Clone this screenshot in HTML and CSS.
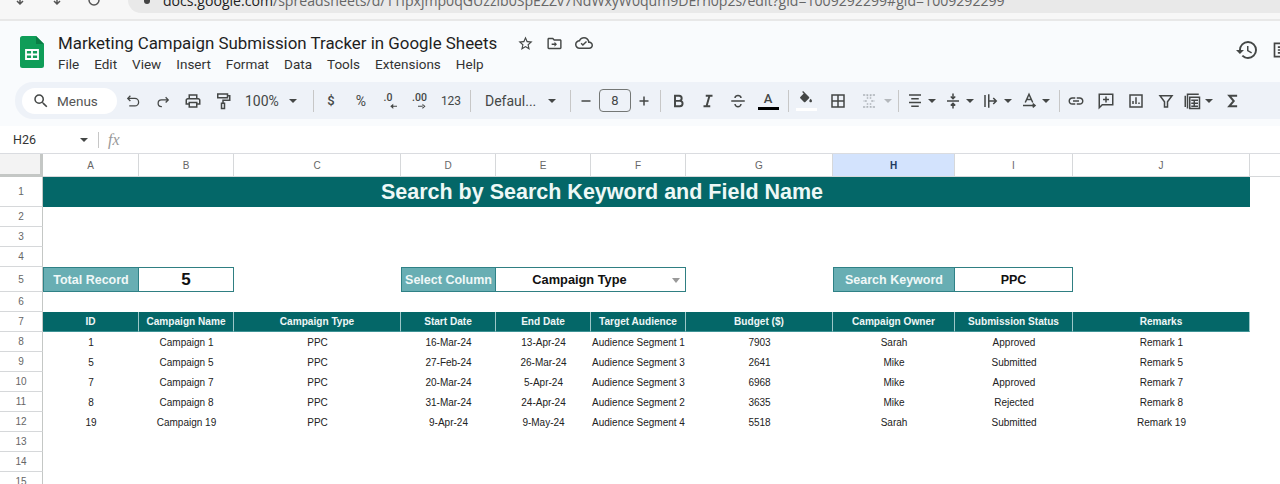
FILE: index.html
```html
<!DOCTYPE html>
<html lang="en">
<head>
<meta charset="utf-8">
<title>Marketing Campaign Submission Tracker in Google Sheets</title>
<link rel="stylesheet" href="styles.css">
</head>
<body>
<div class="chrome">
  <div class="nav">
    <svg class="nav-ic" viewBox="0 0 20 6"><path d="M10 0v4M7 1l3 3 3-3"/></svg>
    <svg class="nav-ic" viewBox="0 0 20 6"><path d="M10 0v4M7 1l3 3 3-3"/></svg>
    <svg class="nav-ic" viewBox="0 0 20 6"><path d="M5 0a5 5 0 0 0 10 0"/></svg>
  </div>
  <div class="addr"><span class="lock"></span><span class="url"><b>docs.google.com</b>/spreadsheets/d/1Tipxjmp0qGUzzib0SpEZZv7NdWxyW0qum9DErn0p2s/edit?gid=1009292299#gid=1009292299</span></div>
</div>
<div class="rule"></div>
<header class="app">
  <svg class="logo" viewBox="0 0 24 32"><path fill="#0f9d58" d="M2.5 0H16l8 8v21.500a2.500 2.500 0 0 1-2.500 2.500h-19A2.500 2.500 0 0 1 0 29.500v-27A2.500 2.500 0 0 1 2.500 0z"/><path fill="#0a7d45" d="M16 0l8 8h-8z"/><path fill="none" stroke="#fff" stroke-width="1.800" d="M6 14h12v9H6zM6 18.500h12M12 14v9"/></svg>
  <div class="doc">
    <div class="doc-title">
      <span class="name">Marketing Campaign Submission Tracker in Google Sheets</span>
      <svg class="ic ic-star" viewBox="0 0 24 24"><path d="M22 9.240l-7.190-.620L12 2 9.190 8.630 2 9.240l5.460 4.730L5.820 21 12 17.270 18.180 21l-1.630-7.030L22 9.240zM12 15.400l-3.760 2.270 1-4.280-3.320-2.880 4.380-.380L12 6.100l1.710 4.040 4.380.380-3.320 2.880 1 4.280L12 15.400z"/></svg>
      <svg class="ic ic-folder" viewBox="0 0 24 24"><path d="M20 6h-8l-2-2H4c-1.100 0-2 .900-2 2v12c0 1.100.900 2 2 2h16c1.100 0 2-.900 2-2V8c0-1.100-.900-2-2-2zm0 12H4V6h5.170l2 2H20v10z"/><path d="M12 9.500l3.500 3.500-3.500 3.500v-2.500H8v-2h4z"/></svg>
      <svg class="ic ic-cloud" viewBox="0 0 24 24"><path d="M19.350 10.040C18.670 6.590 15.640 4 12 4 9.110 4 6.600 5.640 5.350 8.040 2.340 8.360 0 10.910 0 14c0 3.310 2.690 6 6 6h13c2.760 0 5-2.240 5-5 0-2.640-2.050-4.780-4.650-4.960zM19 18H6c-2.210 0-4-1.790-4-4s1.790-4 4-4h.710C7.370 7.690 9.480 6 12 6c3.040 0 5.500 2.460 5.500 5.500v.5H19c1.660 0 3 1.340 3 3s-1.340 3-3 3z"/><path d="M10.500 16l-3-3 1.300-1.300 1.700 1.700 4.200-4.200 1.300 1.300z"/></svg>
    </div>
    <nav class="menu"><span>File</span><span>Edit</span><span>View</span><span>Insert</span><span>Format</span><span>Data</span><span>Tools</span><span>Extensions</span><span>Help</span></nav>
  </div>
  <div class="app-right">
    <svg class="ic ic-hist" viewBox="0 0 24 24"><path d="M13 3a9 9 0 0 0-9 9H1l3.890 3.890.070.140L9 12H6c0-3.870 3.130-7 7-7s7 3.130 7 7-3.130 7-7 7c-1.930 0-3.680-.790-4.940-2.060l-1.420 1.420A8.954 8.954 0 0 0 13 21a9 9 0 0 0 0-18zm-1 5v5l4.280 2.540.720-1.210-3.500-2.080V8H12z"/></svg>
    <svg class="ic ic-notes" viewBox="0 0 24 24"><path fill="none" stroke="#444" stroke-width="2" d="M3 4h18v16H3zM7 8.500h10M7 12h10M7 15.500h10"/></svg>
  </div>
</header>
<div class="toolbar-wrap">
  <div class="toolbar">
    <div class="pill"><svg class="ic ic-s" viewBox="0 0 24 24"><path d="M15.500 14h-.790l-.280-.270A6.470 6.470 0 0 0 16 9.500 6.500 6.500 0 1 0 9.500 16c1.610 0 3.090-.590 4.230-1.570l.270.280v.790l5 4.990L20.490 19l-4.990-5zm-6 0C7.010 14 5 11.990 5 9.500S7.010 5 9.500 5 14 7.010 14 9.500 11.990 14 9.500 14z"/></svg><span>Menus</span></div>
    <div class="btn"><svg class="st thin" viewBox="0 0 24 24"><path d="M8.500 5L5 8.500 8.500 12M5 8.500h9.500a5 5 0 0 1 0 10H7"/></svg></div>
    <div class="btn"><svg class="st thin" viewBox="0 0 24 24"><path d="M15.500 7L19 10.500 15.500 14M19 10.500H10a4.500 4.500 0 0 0 0 9h.5"/></svg></div>
    <div class="btn"><svg class="ic" viewBox="0 0 24 24"><path d="M19 8h-1V3H6v5H5c-1.660 0-3 1.340-3 3v6h4v4h12v-4h4v-6c0-1.660-1.340-3-3-3zM8 5h8v3H8V5zm8 12v2H8v-4h8v2zm2-2v-2H6v2H4v-4c0-.550.450-1 1-1h14c.550 0 1 .450 1 1v4h-2z"/></svg></div>
    <div class="btn"><svg class="st" viewBox="0 0 24 24"><path d="M5 2.500h13v5H5zM18 5h3v6h-9v4M10 15h4v7h-4z"/></svg></div>
    <div class="zoomsel"><span>100%</span><i class="caret"></i></div>
    <div class="sep s-a"></div>
    <div class="btn txt bold-s">$</div>
    <div class="btn txt pct">%</div>
    <div class="btn"><svg class="ic" viewBox="0 0 24 24"><text x="2" y="12" class="dec">.0</text><path d="M12 18.200h8v1.600h-8zM15 15.500v7L11 19z"/></svg></div>
    <div class="btn"><svg class="ic" viewBox="0 0 24 24"><text x="0" y="12" class="dec">.00</text><path d="M8 18.200h8v1.600H8zM14 15.500v7l4-3.500z"/></svg></div>
    <div class="btn txt t123">123</div>
    <div class="sep s-b"></div>
    <div class="fontsel"><span>Defaul...</span><i class="caret"></i></div>
    <div class="sep s-c"></div>
    <div class="btn nar"><svg class="st" viewBox="0 0 24 24"><path d="M6 12h12"/></svg></div>
    <div class="size">8</div>
    <div class="btn nar"><svg class="st" viewBox="0 0 24 24"><path d="M6 12h12M12 6v12"/></svg></div>
    <div class="sep s-d"></div>
    <div class="btn"><svg class="st thick" viewBox="0 0 24 24"><path d="M8 5h5.500a3.300 3.300 0 0 1 0 6.800H8zM8 11.800h6.500a3.600 3.600 0 0 1 0 7.200H8z"/></svg></div>
    <div class="btn"><svg class="st thick" viewBox="0 0 24 24"><path d="M9 5h9M6 19h9M14 5l-4 14"/></svg></div>
    <div class="btn"><svg class="st" viewBox="0 0 24 24"><path d="M3 12h18M16 8c0-2-2-3.500-4-3.500S8 6 8 8M8 16c0 2 2 3.500 4 3.500s4-1.500 4-3.500"/></svg></div>
    <div class="btn col"><span class="a-glyph">A</span><i class="bar black"></i></div>
    <div class="sep s-e"></div>
    <div class="btn col"><svg class="ic ic-fill" viewBox="0 0 24 24"><path d="M16.560 8.940 7.620 0 6.210 1.410l2.380 2.380-5.150 5.150c-.590.590-.590 1.540 0 2.120l5.500 5.500c.290.290.680.440 1.060.440s.770-.150 1.060-.440l5.500-5.500c.590-.580.590-1.530 0-2.120zM19 11.500s-2 2.170-2 3.500c0 1.100.900 2 2 2s2-.900 2-2c0-1.330-2-3.500-2-3.500z"/></svg><i class="bar white"></i></div>
    <div class="btn b-border"><svg class="st" viewBox="0 0 24 24"><path d="M4 4h16v16H4zM12 4v16M4 12h16"/></svg></div>
    <div class="btn"><svg class="st dim dash" viewBox="0 0 24 24"><path d="M4 4h6v5M20 4h-6v5M4 20h6v-5M20 20h-6v-5M9 12H4M15 12h5"/></svg></div>
    <i class="caret dimc c-merge"></i>
    <div class="sep s-f"></div>
    <div class="split"><svg class="st" viewBox="0 0 24 24"><path d="M4 4h16M7 9h10M4 14h16M7 19h10"/></svg><i class="caret"></i></div>
    <div class="split"><svg class="st" viewBox="0 0 24 24"><path d="M4 12h16M12 2v7M12 22v-7M9 6l3 3 3-3M9 18l3-3 3 3"/></svg><i class="caret"></i></div>
    <div class="split"><svg class="st" viewBox="0 0 24 24"><path d="M4 4v16M9 3v18M9 12h10M15 8l4 4-4 4"/></svg><i class="caret"></i></div>
    <div class="split"><svg class="st" viewBox="0 0 24 24"><path d="M7 14l5-11 5 11M9 10h6M4 18h15M17 15.500l3 2.500-3 2.500"/></svg><i class="caret"></i></div>
    <div class="sep s-g"></div>
    <div class="btn"><svg class="ic" viewBox="0 0 24 24"><path d="M3.900 12c0-1.710 1.390-3.100 3.100-3.100h4V7H7c-2.760 0-5 2.240-5 5s2.240 5 5 5h4v-1.900H7c-1.710 0-3.100-1.390-3.100-3.100zM8 13h8v-2H8v2zm9-6h-4v1.900h4c1.710 0 3.100 1.390 3.100 3.100s-1.390 3.100-3.100 3.100h-4V17h4c2.760 0 5-2.240 5-5s-2.240-5-5-5z"/></svg></div>
    <div class="btn"><svg class="st" viewBox="0 0 24 24"><path d="M3 3h18v14H7l-4 4zM12 6v8M8 10h8"/></svg></div>
    <div class="btn"><svg class="st" viewBox="0 0 24 24"><path d="M4 4h16v16H4zM8 16v-4M12 16V7M16 16v-2"/></svg></div>
    <div class="btn"><svg class="st" viewBox="0 0 24 24"><path d="M4 5h16l-6 8v7h-4v-7z"/></svg></div>
    <div class="split func"><svg class="st" viewBox="0 0 24 24"><path d="M3 20V5M6 22V3h15M9 7h13v15H9zM11 11h9M11 15h9M11 19h9M15 11v9"/></svg><i class="caret"></i></div>
    <div class="btn"><svg class="st thick" viewBox="0 0 24 24"><path d="M17.500 5H7l6 7-6 7h10.500"/></svg></div>
  </div>
</div>
<div class="fbar"><span class="ref">H26</span><i class="caret"></i><div class="sep fsep"></div><span class="fx">fx</span></div>
<main class="sheet">
  <div class="row r-head">
    <div class="corner"></div><div class="ch">A</div><div class="ch">B</div><div class="ch">C</div><div class="ch">D</div><div class="ch">E</div><div class="ch">F</div><div class="ch">G</div><div class="ch sel">H</div><div class="ch">I</div><div class="ch">J</div><div class="ch end"></div>
  </div>
  <div class="row r1"><div class="rh">1</div><div class="title">Search by Search Keyword and Field Name</div></div>
  <div class="row r20"><div class="rh">2</div></div>
  <div class="row r20"><div class="rh">3</div></div>
  <div class="row r20"><div class="rh">4</div></div>
  <div class="row r5">
    <div class="rh">5</div>
    <div class="lab">Total Record</div><div class="val big">5</div><div></div>
    <div class="lab">Select Column</div><div class="val span2">Campaign Type<i class="dd"></i></div><div></div>
    <div class="lab">Search Keyword</div><div class="val">PPC</div>
  </div>
  <div class="row r20"><div class="rh">6</div></div>
  <div class="row r20 r-th">
    <div class="rh">7</div><div class="th">ID</div><div class="th">Campaign Name</div><div class="th">Campaign Type</div><div class="th">Start Date</div><div class="th">End Date</div><div class="th">Target Audience</div><div class="th">Budget ($)</div><div class="th">Campaign Owner</div><div class="th">Submission Status</div><div class="th">Remarks</div>
  </div>
  <div class="row r20"><div class="rh">8</div><div class="td">1</div><div class="td">Campaign 1</div><div class="td">PPC</div><div class="td">16-Mar-24</div><div class="td">13-Apr-24</div><div class="td">Audience Segment 1</div><div class="td">7903</div><div class="td">Sarah</div><div class="td">Approved</div><div class="td">Remark 1</div></div>
  <div class="row r20"><div class="rh">9</div><div class="td">5</div><div class="td">Campaign 5</div><div class="td">PPC</div><div class="td">27-Feb-24</div><div class="td">26-Mar-24</div><div class="td">Audience Segment 3</div><div class="td">2641</div><div class="td">Mike</div><div class="td">Submitted</div><div class="td">Remark 5</div></div>
  <div class="row r20"><div class="rh">10</div><div class="td">7</div><div class="td">Campaign 7</div><div class="td">PPC</div><div class="td">20-Mar-24</div><div class="td">5-Apr-24</div><div class="td">Audience Segment 3</div><div class="td">6968</div><div class="td">Mike</div><div class="td">Approved</div><div class="td">Remark 7</div></div>
  <div class="row r20"><div class="rh">11</div><div class="td">8</div><div class="td">Campaign 8</div><div class="td">PPC</div><div class="td">31-Mar-24</div><div class="td">24-Apr-24</div><div class="td">Audience Segment 2</div><div class="td">3635</div><div class="td">Mike</div><div class="td">Rejected</div><div class="td">Remark 8</div></div>
  <div class="row r20"><div class="rh">12</div><div class="td">19</div><div class="td">Campaign 19</div><div class="td">PPC</div><div class="td">9-Apr-24</div><div class="td">9-May-24</div><div class="td">Audience Segment 4</div><div class="td">5518</div><div class="td">Sarah</div><div class="td">Submitted</div><div class="td">Remark 19</div></div>
  <div class="row r20"><div class="rh">13</div></div>
  <div class="row r20"><div class="rh">14</div></div>
  <div class="row r20"><div class="rh">15</div></div>
</main>
</body>
</html>
```

FILE: styles.css
```css
* { box-sizing: border-box; }
html, body { margin: 0; height: 484px; overflow: hidden; background: #fff; }
body { font-family: "Roboto", "Liberation Sans", sans-serif; color: #444746; }
i { display: block; font-style: normal; }

.chrome { height: 19px; background: #f7f7f7; display: flex; align-items: flex-start; overflow: hidden; }
.nav { width: 128px; display: flex; gap: 17px; padding-left: 10px; }
.nav-ic { width: 20px; height: 6px; fill: none; stroke: #555; stroke-width: 1.500; }
.addr { flex: 1; height: 13px; background: #e9e9e9; border-bottom-left-radius: 13px; overflow: hidden; display: flex; padding-left: 16px; }
.lock { width: 6px; height: 4px; background: #444; border-radius: 0 0 3px 3px; margin-right: 13px; }
.url { font-family: "Open Sans", "Liberation Sans", sans-serif; font-size: 14.100px; line-height: 0; padding-top: 1px; color: #666; white-space: nowrap; }
.url b { font-weight: 400; color: #222; }
.rule { height: 2px; background: #e8e8e8; }

.app { height: 61px; background: #f9fbfd; display: flex; align-items: flex-start; padding: 15px 0 0 20px; }
.logo { width: 24px; height: 32px; flex: none; }
.doc { margin-left: 14px; margin-top: -6px; }
.doc-title { display: flex; align-items: center; height: 26px; }
.name { font-size: 16.900px; color: #1f1f1f; white-space: nowrap; width: 459px; }
.ic { width: 18px; height: 18px; fill: #444746; flex: none; }
.ic-folder { margin-left: 12px; width: 17px; height: 17px; }
.ic-cloud { margin-left: 12px; }
.ic-star { width: 17px; height: 17px; }
.menu { display: flex; gap: 15px; font-size: 13.500px; color: #333; margin-top: -1px; line-height: 18px; }
.app-right { margin-left: auto; display: flex; align-items: center; gap: 13px; margin-right: -12px; margin-top: 2px; }
.ic-hist { width: 24px; height: 24px; }
.ic-notes { width: 20px; height: 20px; }

.toolbar-wrap { height: 44px; background: #f9fbfd; padding: 0 0 7px 15px; }
.toolbar { height: 37px; background: #eef2f8; border-radius: 18px 0 0 18px; display: flex; align-items: center; padding-left: 7px; white-space: nowrap; }
.pill { width: 95px; height: 26px; background: #fff; border-radius: 13px; display: flex; align-items: center; padding-left: 10px; gap: 7px; font-size: 13.500px; color: #555; flex: none; }
.btn { width: 30px; height: 30px; display: flex; align-items: center; justify-content: center; flex: none; font-size: 13px; }
.btn.nar { width: 26px; }
.st { width: 18px; height: 18px; fill: none; stroke: #444746; stroke-width: 2; flex: none; }
.st.thin { stroke-width: 1.700; }
.st.thick { stroke-width: 2.600; }
.st.dim { stroke: #aeb4b9; }
.st.dash { stroke-dasharray: 3 1.500; }
.pill + .btn { margin-left: 1px; }
.txt { color: #444746; }
.bold-s { font-weight: 500; }
.pct { font-size: 14px; }
.t123 { font-size: 12px; }
.dec { font: 500 14px "Roboto", sans-serif; }
.zoomsel { width: 70px; padding-left: 7px; display: flex; align-items: center; gap: 10px; font-size: 14px; flex: none; }
.caret { width: 0; height: 0; border: 4px solid transparent; border-top: 4px solid #444746; border-bottom: 0; flex: none; }
.sep { width: 1px; height: 22px; background: #c7c7c7; flex: none; }
.s-a { margin: 0 2px 0 5px; }
.s-b { margin: 0 2px 0 4px; }
.s-c { margin: 0 2px 0 5px; }
.s-d { margin: 0 2px 0 3px; }
.s-e { margin: 0 2px 0 5px; }
.s-f { margin: 0 5px 0 6px; }
.s-g { margin: 0 1px 0 3px; }
.fontsel { width: 92px; padding-left: 12px; display: flex; align-items: center; gap: 12px; font-size: 14px; flex: none; }
.size { width: 32px; height: 23px; border: 1px solid #747775; border-radius: 4px; display: flex; align-items: center; justify-content: center; font-size: 13px; flex: none; }
.col { flex-direction: column; justify-content: center; gap: 1px; }
.a-glyph { font-size: 13px; font-weight: 500; line-height: 14px; }
.bar { width: 21px; height: 3px; }
.bar.black { background: #000; }
.bar.white { background: #fff; }
.ic-fill { width: 16px; height: 16px; }
.b-border { margin: 0 1px 0 2px; }
.caret.dimc { border-top-color: #b4b8bc; }
.split { width: 38px; display: flex; align-items: center; flex: none; }
.split .st { width: 22px; height: 18px; }
.split .caret { margin-left: 2px; }
.func { width: 37px; }

.fbar { height: 28px; background: #fff; border-bottom: 1px solid #dadce0; display: flex; align-items: center; padding-left: 13px; }
.ref { width: 67px; font-size: 12.500px; color: #333; }
.fsep { height: 16px; margin-left: 10px; }
.fx { font: italic 16px "Liberation Serif", serif; color: #999; margin-left: 9px; }

.sheet { font-family: "Liberation Sans", Arial, sans-serif; }
.row { display: grid; grid-template-columns: 43px 96px 95px 167px 95px 95px 95px 147px 122px 118px 177px 30px; }
.r-head { height: 23px; }
.r1 { height: 30px; }
.r20 { height: 20px; }
.r5 { height: 25px; }
.corner { background: #f3f3f3; border-right: 3px solid #c4c7c5; border-bottom: 3px solid #c4c7c5; }
.ch { font-size: 10px; display: flex; align-items: center; justify-content: center; border-right: 1px solid #d6d8da; border-bottom: 1px solid #d6d8da; color: #666; }
.ch.sel { background: #d3e3fd; color: #1f3a60; font-weight: 700; }
.ch.end { border-right: 0; }
.rh { font-size: 10px; display: flex; align-items: center; justify-content: center; border-right: 1px solid #c4c7c5; border-bottom: 1px solid #d6d8da; color: #666; background: #fff; }
.title { grid-column: 2 / 12; background: #046768; color: #eef8f6; font-size: 21.500px; font-weight: 700; display: flex; align-items: center; justify-content: center; padding-right: 89px; }
.lab { background: #68aeb3; color: #f0f8f8; font-size: 12.500px; font-weight: 700; display: flex; align-items: center; justify-content: center; border: 1px solid #2f8186; white-space: nowrap; }
.val { border: 1px solid #2f7f82; border-left: 0; font-size: 12.500px; font-weight: 700; color: #111; display: flex; align-items: center; justify-content: center; position: relative; }
.val.big { font-size: 17px; }
.span2 { grid-column: span 2; font-size: 12.800px; padding-right: 22px; }
.dd { position: absolute; right: 5px; top: 10px; border: 4px solid transparent; border-top: 5px solid #999; border-bottom: 0; }
.th { background: #046768; color: #eef6f6; font-size: 10.100px; font-weight: 700; display: flex; align-items: center; justify-content: center; border-right: 1px solid #9cc7c8; border-bottom: 1px solid #3d9295; white-space: nowrap; }
.td { font-size: 10px; color: #222; display: flex; align-items: center; justify-content: center; white-space: nowrap; }
```
